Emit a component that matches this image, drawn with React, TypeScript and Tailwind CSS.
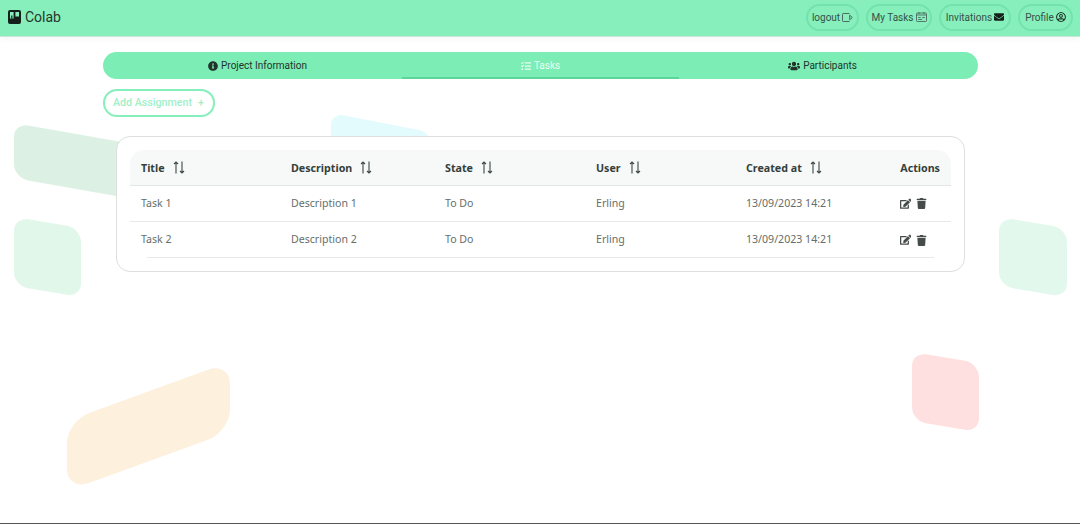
import { FaInfoCircle, FaTasks, FaUsers, FaEnvelope, FaRegUserCircle, FaEdit, FaTrash } from "react-icons/fa";

const roboto = "font-['Roboto',sans-serif]";

function Sort() {
  return (
    <svg width="12" height="13" viewBox="0 0 12 13" fill="none" stroke="#3d4945" strokeWidth="1.1" className="ml-[8px] inline-block -translate-y-[2px]">
      <path d="M3 12.5V1M1 3 3 1l2 2M9 .5V12M7 10l2 2 2-2" />
    </svg>
  );
}

function LogoutIcon() {
  return (
    <svg width="11" height="9" viewBox="0 0 11 9" fill="none" stroke="#4c6a60" strokeWidth="1">
      <path d="M7.5 .5H1.2a.7.7 0 0 0-.7.7v6.6a.7.7 0 0 0 .7.7h6.3" />
      <path d="M7.7 2.2 10.3 4.5 7.7 6.8Z" />
    </svg>
  );
}

function TasksIcon() {
  return (
    <svg width="11" height="10" viewBox="0 0 11 10" fill="none" stroke="#4c6a60" strokeWidth="0.9">
      <rect x=".5" y="1" width="10" height="8.5" rx=".8" />
      <path d="M3 0v2.2M8 0v2.2M.5 3h10M2.2 5.5h2.5M6.3 5.5h2.5M2.2 7.5h4" />
    </svg>
  );
}

function NavBtn({ label, icon, w }: { label: string; icon: React.ReactNode; w: string }) {
  return (
    <div className={`${w} h-[27px] rounded-full border-2 border-[#73e2ac] flex items-center justify-center gap-[2px] text-[10px] text-[#35524a]`}>
      <span>{label}</span>
      {icon}
    </div>
  );
}

function Tab({ icon, label, active, cls }: { icon: React.ReactNode; label: string; active?: boolean; cls: string }) {
  return (
    <div className={`${cls} h-full flex items-center justify-center gap-[3px] pt-[2px] text-[10px] border-b-[2px] ${active ? "text-[#eafff4] border-[#5bd598]" : "text-[#22332c] border-transparent"}`}>
      {icon}
      <span>{label}</span>
    </div>
  );
}

const cols = ["w-[161px] pl-[11px]", "w-[154px]", "w-[151px]", "w-[150px]", "w-[130px]"];

function Row({ title, last }: { title: string; last?: boolean }) {
  const values = [title, `Description ${title.slice(-1)}`, "To Do", "Erling", "13/09/2023 14:21"];
  return (
    <div className={`h-[36px] flex items-center text-[10.6px] text-[#656e6a] relative ${last ? "" : "border-b border-[#e6e9e8]"}`}>
      {values.map((v, i) => (
        <div key={v + i} className={cols[i]}>{v}</div>
      ))}
      <div className="flex-1 flex items-center justify-end gap-[5px] pr-[24px] text-[#454c49]">
        <FaEdit size={11.5} />
        <FaTrash size={11} />
      </div>
      {last && <div className="absolute left-[17px] right-[17px] bottom-0 h-px bg-[#e6e9e8]" />}
    </div>
  );
}

export default function App() {
  return (
    <div className={`relative h-[524px] overflow-hidden bg-white border-b border-[#555] ${roboto}`}>
      <div className="absolute left-[14px] top-[123px] w-[180px] h-[55px] rounded-[14px] bg-[#dcf1e3] origin-top-left skew-y-[10deg]" />
      <div className="absolute left-[331px] top-[113px] w-[100px] h-[60px] rounded-[12px] bg-[#e3fbfd] origin-top-left skew-y-[11deg]" />
      <div className="absolute left-[14px] top-[217px] w-[67px] h-[69px] rounded-[14px] bg-[#e1f7ea] origin-top-left skew-y-[9.5deg]" />
      <div className="absolute left-[999px] top-[217px] w-[68px] h-[69px] rounded-[14px] bg-[#e3f8ec] origin-top-left skew-y-[9.5deg]" />
      <div className="absolute left-[912px] top-[352px] w-[67px] h-[69px] rounded-[14px] bg-[#ffe0e0] origin-top-left skew-y-[9.5deg]" />
      <div className="absolute left-[67px] top-[421px] w-[163px] h-[70px] rounded-[22px] bg-[#fdf1de] origin-top-left -skew-y-[20deg]" />

      <div className="relative">
        <header className="h-[37px] pb-[2px] bg-[#86efbb] border-b border-[#c9e9d8] shadow-[0_2px_6px_rgba(0,0,0,0.04)] flex items-center justify-between pl-[8px] pr-[7px]">
          <div className="flex items-center gap-[4px] text-[14px] text-[#26362f]">
            <svg width="13" height="14" viewBox="0 0 13 14">
              <rect width="13" height="14" rx="2" fill="#15201b" />
              <rect x="2" y="2" width="3.6" height="6.5" fill="#86efbb" />
              <rect x="3.2" y="5.5" width="1.2" height="3" fill="#15201b" />
              <rect x="7.4" y="2" width="3.6" height="4.5" fill="#86efbb" />
            </svg>
            <span>Colab</span>
          </div>
          <div className="flex items-center gap-[7px]">
            <NavBtn w="w-[53px]" label="logout" icon={<LogoutIcon />} />
            <NavBtn w="w-[66px]" label="My Tasks" icon={<TasksIcon />} />
            <NavBtn w="w-[72px]" label="Invitations" icon={<FaEnvelope size={10} className="text-[#15201b]" />} />
            <NavBtn w="w-[55px]" label="Profile" icon={<FaRegUserCircle size={10} className="text-[#15201b]" />} />
          </div>
        </header>

        <div className="ml-[103px] mt-[15px] w-[875px] h-[27px] rounded-full bg-[#7cedb4] flex overflow-hidden">
          <Tab cls="w-[299px] pl-[10px]" icon={<FaInfoCircle size={10} />} label="Project Information" />
          <Tab cls="w-[277px]" active icon={<FaTasks size={10} />} label="Tasks" />
          <Tab cls="w-[299px] pr-[12px]" icon={<FaUsers size={12} />} label="Participants" />
        </div>

        <div className="ml-[103px] mt-[10px] w-[112px] h-[28px] pt-[1px] pr-[1px] rounded-full border-2 border-[#86efbb] flex items-center justify-center gap-[6px] text-[10.7px] font-medium text-[#a1f0c8] bg-white">
          Add Assignment <span>+</span>
        </div>

        <div className="ml-[116px] mt-[19px] w-[849px] h-[136px] rounded-[14px] border border-[#dcdfde] bg-white p-[13px] font-['Noto_Sans',sans-serif]">
          <div className="h-[36px] pt-[2px] rounded-t-[14px] bg-[#f7f9f8] border-b border-[#e2e6e4] flex items-center text-[10.7px] font-bold text-[#343f3b]">
            {["Title", "Description", "State", "User", "Created at"].map((h, i) => (
              <div key={h} className={cols[i]}>{h}<Sort /></div>
            ))}
            <div className="flex-1 text-right pr-[11px]">Actions</div>
          </div>
          <Row title="Task 1" />
          <Row title="Task 2" last />
        </div>
      </div>
    </div>
  );
}
